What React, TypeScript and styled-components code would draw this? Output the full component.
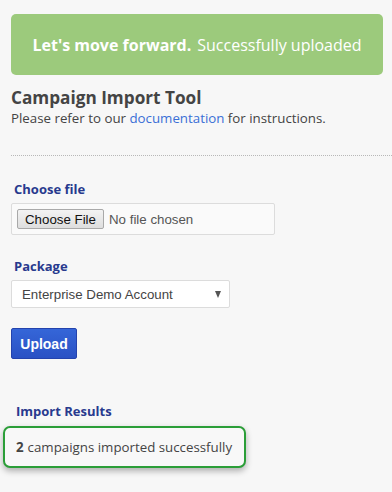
import React from 'react';
import styled, { createGlobalStyle } from 'styled-components';

const GlobalStyle = createGlobalStyle`
  body {
    margin: 0;
    background: #f7f7f7;
    font-family: 'Open Sans', 'Liberation Sans', sans-serif;
    color: #444;
  }
`;

const Page = styled.div`
  padding: 14px 0 20px 11px;
`;

const Banner = styled.div`
  height: 61px;
  margin-right: 9px;
  background: #9cca7c;
  border-radius: 5px;
  display: flex;
  align-items: center;
  justify-content: center;
  color: #fff;
  font-size: 16px;
  white-space: nowrap;
  b {
    font-weight: 700;
    margin-right: 6px;
  }
`;

const Title = styled.h2`
  margin: 12px 0 0;
  font-size: 17.2px;
  line-height: 22px;
  font-weight: 700;
  color: #444;
`;

const Sub = styled.p`
  margin: 0;
  font-size: 13.3px;
  line-height: 18px;
  color: #444;
  a {
    color: #3a6fd6;
    text-decoration: none;
  }
`;

const Divider = styled.hr`
  margin: 28px 0 0;
  border: 0;
  border-top: 1px dotted #b8b8b8;
`;

const Label = styled.div<{ $top: number; $indent?: number }>`
  margin-top: ${(p) => p.$top}px;
  padding-left: ${(p) => p.$indent ?? 3}px;
  font-size: 13px;
  line-height: 18px;
  font-weight: 700;
  color: #283a8e;
`;

const FileBox = styled.div`
  margin-top: 5px;
  width: 264px;
  height: 32px;
  box-sizing: border-box;
  border: 1px solid #dcdcdc;
  border-radius: 2px;
  background: #fafafa;
  display: flex;
  align-items: center;
  padding-left: 5px;
  gap: 5px;
  font-family: 'Liberation Sans', Arial, sans-serif;
  font-size: 13.3px;
  color: #555;
`;

const FileButton = styled.span`
  height: 20px;
  width: 87px;
  box-sizing: border-box;
  border: 1px solid #a9a9a9;
  border-radius: 2px;
  background: linear-gradient(#f3f3f3, #dedede);
  color: #111;
  display: flex;
  align-items: center;
  justify-content: center;
`;

const Select = styled.div`
  margin-top: 5px;
  width: 219px;
  height: 28px;
  box-sizing: border-box;
  border: 1px solid #dcdcdc;
  border-radius: 2px;
  background: #fff;
  display: flex;
  align-items: center;
  justify-content: space-between;
  padding: 0 8px 0 10px;
  font-family: 'Liberation Sans', Arial, sans-serif;
  font-size: 13.3px;
  color: #444;
`;

const Caret = styled.span`
  width: 0;
  height: 0;
  border-left: 3.5px solid transparent;
  border-right: 3.5px solid transparent;
  border-top: 7px solid #555;
`;

const UploadButton = styled.button`
  display: block;
  margin-top: 20px;
  width: 66px;
  height: 31px;
  border: 1px solid #2443ad;
  border-radius: 2px;
  background: linear-gradient(#3566d8, #2a51c4);
  color: #fff;
  font-family: 'Liberation Sans', Arial, sans-serif;
  font-weight: 700;
  font-size: 14px;
  padding: 0;
`;

const ResultBox = styled.div`
  margin: 6px 0 0 -8px;
  width: 243px;
  height: 42px;
  box-sizing: border-box;
  border: 2.5px solid #2b9e38;
  border-radius: 7px;
  background: #f8f8f8;
  box-shadow: 0 3px 6px rgba(0, 0, 0, 0.3);
  display: flex;
  align-items: center;
  padding-left: 11px;
  font-size: 13.3px;
  color: #444;
  b {
    margin-right: 4px;
  }
`;

export default function App() {
  return (
    <>
      <GlobalStyle />
      <Page>
        <Banner>
          <b>Let's move forward.</b> Successfully uploaded
        </Banner>
        <Title>Campaign Import Tool</Title>
        <Sub>
          Please refer to our <a href="#">documentation</a> for instructions.
        </Sub>
        <Divider />
        <Label $top={24}>Choose file</Label>
        <FileBox>
          <FileButton>Choose File</FileButton>
          No file chosen
        </FileBox>
        <Label $top={22}>Package</Label>
        <Select>
          Enterprise Demo Account
          <Caret />
        </Select>
        <UploadButton>Upload</UploadButton>
        <Label $top={43} $indent={5}>
          Import Results
        </Label>
        <ResultBox>
          <b>2</b>campaigns imported successfully
        </ResultBox>
      </Page>
    </>
  );
}
